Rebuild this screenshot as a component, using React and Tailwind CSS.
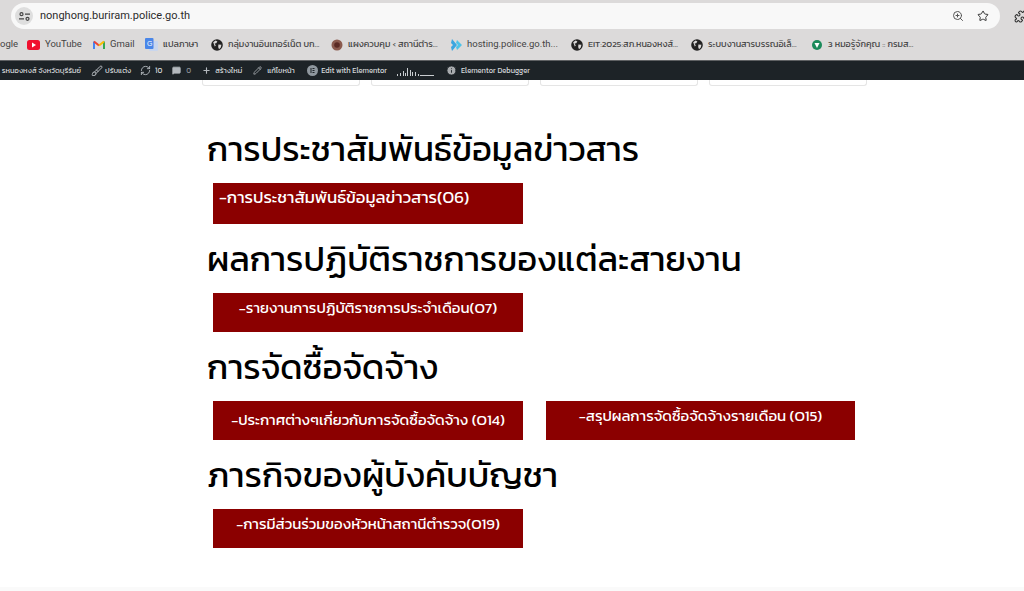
import { ZoomIn, Star, Puzzle, Plus, Pencil, RefreshCw, MessageSquare, Info, Brush } from "lucide-react";

const THAI = "font-['Kanit','Noto_Sans_Thai','Noto_Sans','DejaVu_Sans',sans-serif]";

const BOOKMARKS = [
  { label: "ogle", width: "w-[27px]", icon: null, latin: true },
  { label: "YouTube", width: "w-[66px]", icon: "yt", latin: true },
  { label: "Gmail", width: "w-[52px]", icon: "gmail", latin: true },
  { label: "แปลภาษา", width: "w-[66px]", icon: "translate" },
  { label: "กลุ่มงานอินเทอร์เน็ต บก...", width: "w-[120px]", icon: "globe" },
  { label: "แผงควบคุม ‹ สถานีตำร...", width: "w-[120px]", icon: "seal" },
  { label: "hosting.police.go.th...", width: "w-[120px]", icon: "host", latin: true },
  { label: "EIT:2025:สภ.หนองหงส์...", width: "w-[120px]", icon: "globe" },
  { label: "ระบบงานสารบรรณอิเล็...", width: "w-[120px]", icon: "globe" },
  { label: "3 หมอรู้จักคุณ :: กรมส...", width: "w-[130px]", icon: "green" },
];

const BookmarkIcon = ({ type }) => {
  if (type === "yt")
    return (
      <svg width="13" height="10" viewBox="0 0 13 10">
        <rect width="13" height="10" rx="2.5" fill="#f00f2e" />
        <path d="M5 2.6 9 5 5 7.4z" fill="#fff" />
      </svg>
    );
  if (type === "gmail")
    return (
      <svg width="12" height="10" viewBox="0 0 12 10" fill="none">
        <path d="M1 9V1.5" stroke="#4285f4" strokeWidth="2" />
        <path d="M11 9V1.5" stroke="#34a853" strokeWidth="2" />
        <path d="M1 1.5 6 5.5" stroke="#ea4335" strokeWidth="2" />
        <path d="M6 5.5 11 1.5" stroke="#fbbc04" strokeWidth="2" />
      </svg>
    );
  if (type === "translate")
    return (
      <svg width="13" height="14" viewBox="0 0 13 14">
        <rect x="4" y="3" width="9" height="10" rx="1" fill="#c9d6ee" />
        <rect width="8.5" height="11" rx="1" fill="#4a86e8" />
        <text x="2" y="8" fontSize="7" fill="#fff" fontFamily="Liberation Sans">G</text>
      </svg>
    );
  if (type === "globe")
    return (
      <svg width="12" height="12" viewBox="0 0 12 12">
        <circle cx="6" cy="6" r="5.8" fill="#222" />
        <path d="M2.2 3.2 4.6 1.6 6.4 2.4 5.2 4.2 3.6 4.6 4.8 6.6 3.8 7.6zM7.4 5.4 10.4 5.8 9.8 8.4 8 10.2 7.2 8z" fill="#dcdada" />
      </svg>
    );
  if (type === "seal")
    return (
      <svg width="12" height="12" viewBox="0 0 12 12">
        <circle cx="6" cy="6" r="5.5" fill="#8a5a4e" />
        <circle cx="6" cy="6" r="2.8" fill="#5b2a24" />
      </svg>
    );
  if (type === "host")
    return (
      <svg width="11" height="12" viewBox="0 0 11 12">
        <path d="M1 0 6 6 1 12 0 8 2 6 0 4z" fill="#3ba6e0" />
        <path d="M6 1 11 6 6 11 5 8 7 6 5 4z" fill="#4dc3e8" />
      </svg>
    );
  if (type === "green")
    return (
      <svg width="12" height="12" viewBox="0 0 12 12">
        <circle cx="6" cy="6" r="5" fill="#1b8a5a" />
        <path d="M3.5 4h5L6 9z" fill="#fff" />
      </svg>
    );
  return null;
};

const BrowserBar = () => (
  <div className="bg-[#dcdada] h-[60px] flex flex-col">
    <div className="h-[29px] pt-[3px] flex items-start">
      <div className="ml-[11px] w-[989px] shrink-0 h-[26px] bg-[#f8f8f8] rounded-full flex items-center">
        <div className="ml-[4px] w-[18px] h-[18px] rounded-full bg-[#dedede] flex items-center justify-center">
          <svg width="11" height="9" viewBox="0 0 11 9" fill="none" stroke="#444" strokeWidth="1.2">
            <circle cx="2.5" cy="2.2" r="1.5" />
            <path d="M6 2.2h5M0 6.8h5" />
            <circle cx="8.5" cy="6.8" r="1.5" />
          </svg>
        </div>
        <span className="ml-[7px] text-[11px] text-[#2c2c2c] font-['Roboto',sans-serif]">nonghong.buriram.police.go.th</span>
        <div className="ml-auto flex items-center gap-[13px] mr-[11px]">
          <ZoomIn size={12} className="text-[#555]" />
          <Star size={12} className="text-[#333]" />
        </div>
      </div>
      <Puzzle size={13} className="ml-[14px] mt-[7px] text-[#333] shrink-0" />
    </div>
    <div className="flex-1 flex items-center overflow-hidden whitespace-nowrap">
      {BOOKMARKS.map((b) => (
        <div
          key={b.label}
          className={`${b.width} shrink-0 flex items-center gap-[5px] text-[#444] ${THAI}`}
        >
          <BookmarkIcon type={b.icon} />
          <span className={b.latin ? "text-[9.5px] font-['Roboto',sans-serif]" : "text-[9px]"}>{b.label}</span>
        </div>
      ))}
    </div>
  </div>
);

const AdminBar = () => (
  <div className={`bg-[#1d2327] h-[20px] border-t border-[#5f6163] flex items-center text-[7.5px] text-[#d5d8da] whitespace-nowrap ${THAI}`}>
    <span className="w-[81px] text-right">รหนองหงส์ จังหวัดบุรีรัมย์</span>
    <Brush size={12} className="ml-[10px] text-[#b4b9be]" />
    <span className="ml-[2px] w-[26px]">ปรับแต่ง</span>
    <RefreshCw size={11} className="ml-[9px] text-[#b4b9be]" />
    <span className="ml-[4px]">10</span>
    <MessageSquare size={9} className="ml-[10px] text-[#b4b9be]" fill="#b4b9be" />
    <span className="ml-[5px] text-[#8c8f94]">0</span>
    <Plus size={9} className="ml-[11px] text-[#b4b9be]" strokeWidth={3} />
    <span className="ml-[4px] w-[28px]">สร้างใหม่</span>
    <Pencil size={9} className="ml-[10px] text-[#b4b9be]" />
    <span className="ml-[5px] w-[31px]">แก้ไขหน้า</span>
    <svg className="ml-[9px]" width="11" height="11" viewBox="0 0 11 11">
      <circle cx="5.5" cy="5.5" r="5.5" fill="#8f979e" />
      <path d="M3.5 3h1v5h-1zM5.5 3h2v1h-2zM5.5 5h2v1h-2zM5.5 7h2v1h-2z" fill="#1d2327" />
    </svg>
    <span className="ml-[3px]">Edit with Elementor</span>
    <svg className="ml-[10px]" width="37" height="10" viewBox="0 0 37 10" fill="#c9cdd0">
      <path d="M0 8h1v2H0zM3 7h1v3H3zM6 5h1v5H6zM8 7h1v3H8zM10 2h1v8h-1zM13 4h1v6h-1zM15 6h1v4h-1zM18 6h1v4h-1zM21 8h1v2h-1zM23 9h14v1H23z" />
    </svg>
    <Info size={11} className="ml-[12px] text-[#1d2327]" fill="#a7aaad" />
    <span className="ml-[4px]">Elementor Debugger</span>
  </div>
);

// Cards of the row above, only their bottom edge is still on screen
const PeekCards = () => (
  <div className="flex gap-[11px] pl-[202px]">
    {[0, 1, 2, 3].map((i) => (
      <div key={i} className="h-[6px] w-[158px] bg-white border border-t-0 border-[#e5e5e5] rounded-b-[3px]" />
    ))}
  </div>
);

const LinkButton = ({ children, className = "" }) => (
  <a className={`block bg-[#8b0000] text-white leading-[24px] text-center ${className}`}>{children}</a>
);

const Heading = ({ children, className = "" }) => (
  <h2 className={`ml-[207px] text-[34.5px] leading-[50px] text-black ${className}`}>{children}</h2>
);

export default function App() {
  return (
    <div className="w-[1024px] h-[591px] overflow-hidden bg-white flex flex-col">
      <BrowserBar />
      <AdminBar />
      <PeekCards />
      <main className={`flex-1 flex flex-col ${THAI}`}>
        <Heading className="mt-[38px]">การประชาสัมพันธ์ข้อมูลข่าวสาร</Heading>
        <div className="ml-[213px] mt-[9px]">
          <LinkButton className="w-[310px] h-[41px] pt-[3px] text-left pl-[6px] text-[16.8px]">-การประชาสัมพันธ์ข้อมูลข่าวสาร(O6)</LinkButton>
        </div>
        <Heading className="mt-[10px]">ผลการปฏิบัติราชการของแต่ละสายงาน</Heading>
        <div className="ml-[213px] mt-[9px]">
          <LinkButton className="w-[310px] h-[39px] pt-[3px] text-[15px]">-รายงานการปฏิบัติราชการประจำเดือน(O7)</LinkButton>
        </div>
        <Heading className="mt-[10px]">การจัดซื้อจัดจ้าง</Heading>
        <div className="ml-[213px] mt-[9px] flex gap-[23px]">
          <LinkButton className="w-[310px] h-[39px] pt-[7px] text-[15px]">-ประกาศต่างๆเกี่ยวกับการจัดซื้อจัดจ้าง (O14)</LinkButton>
          <LinkButton className="w-[309px] h-[39px] pt-[3px] text-[15px]">-สรุปผลการจัดซื้อจัดจ้างรายเดือน (O15)</LinkButton>
        </div>
        <Heading className="mt-[10px]">ภารกิจของผู้บังคับบัญชา</Heading>
        <div className="ml-[213px] mt-[9px]">
          <LinkButton className="w-[310px] h-[39px] pt-[3px] text-[15px]">-การมีส่วนร่วมของหัวหน้าสถานีตำรวจ(O19)</LinkButton>
        </div>
      </main>
      <div className="h-[4px] bg-[#fafafa]" />
    </div>
  );
}
